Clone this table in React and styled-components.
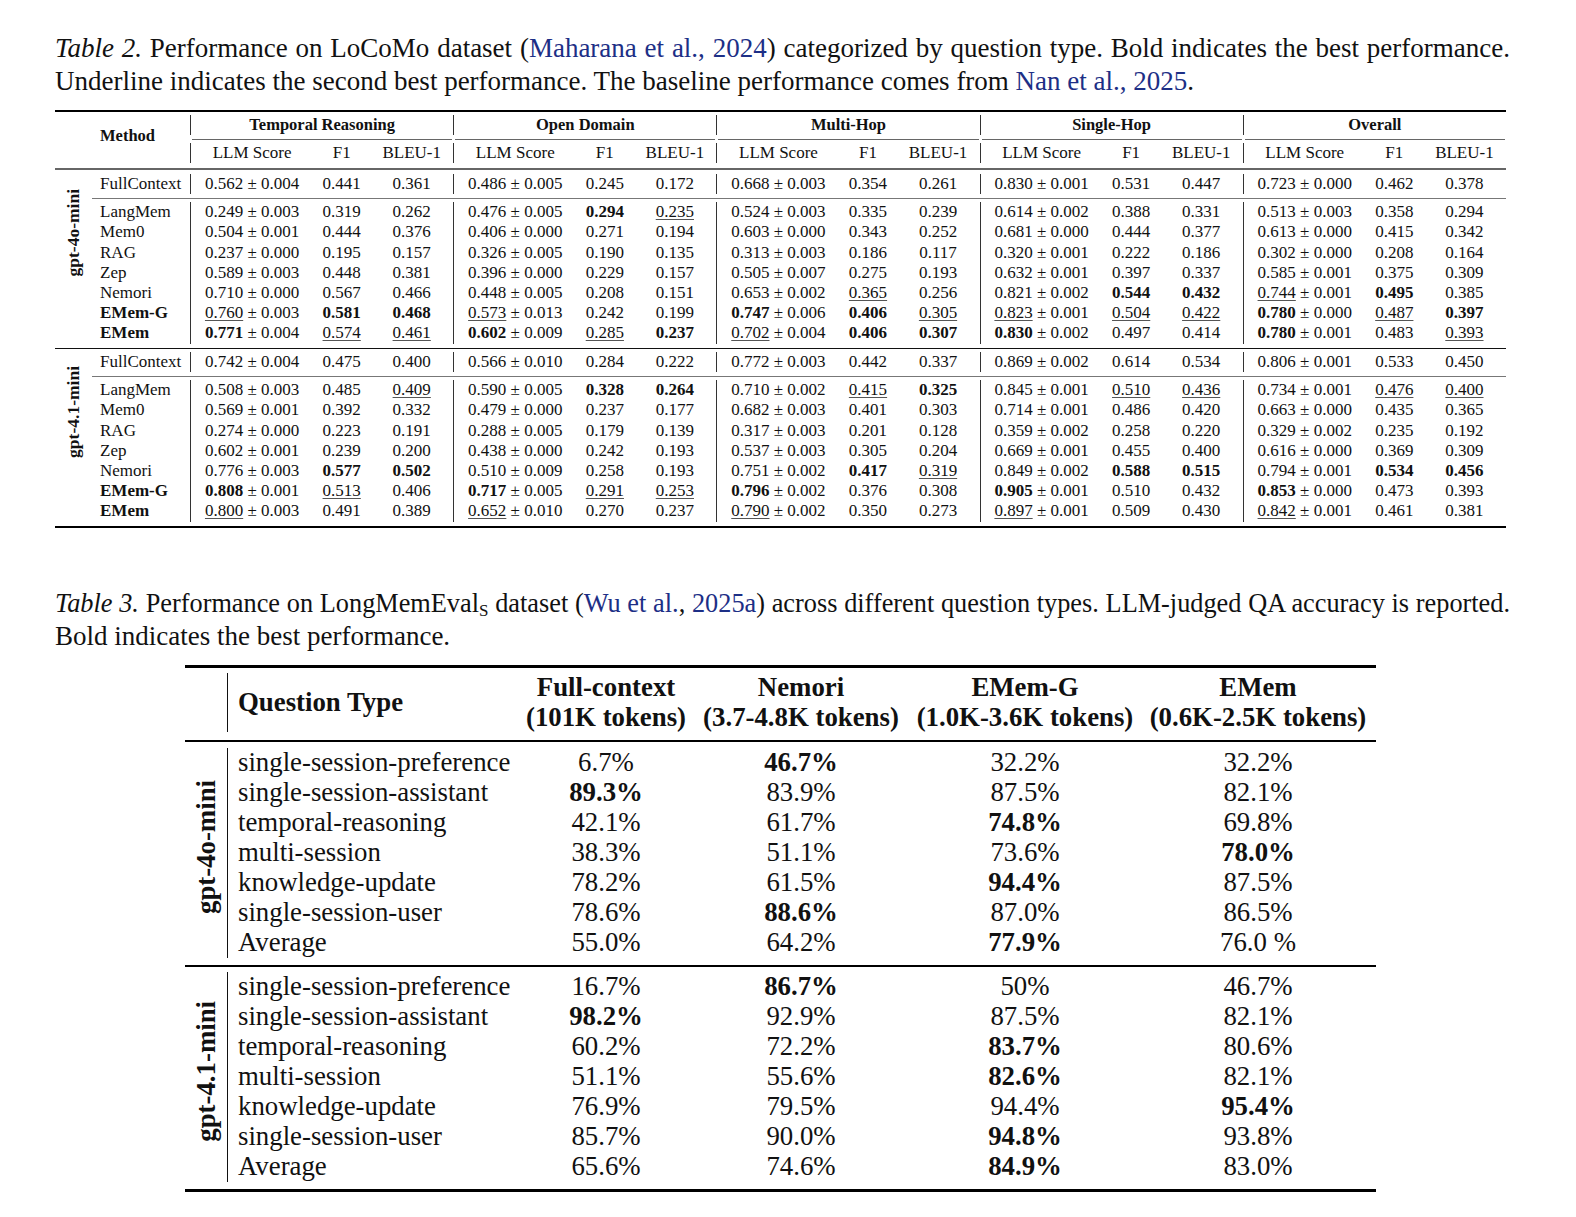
import React from 'react';
import styled, { createGlobalStyle } from 'styled-components';

const GlobalStyle = createGlobalStyle`
  html, body { margin: 0; padding: 0; background: #fff; }
  body { font-family: "Liberation Serif", "Times New Roman", serif; color: #111; }
`;

const Page = styled.div`
  width: 1576px;
  padding: 32px 0 0 55px;
  box-sizing: border-box;
`;

const Caption = styled.div`
  width: 1455px;
  font-size: 27px;
  line-height: 33px;
  margin-top: ${p => p.$top || 0}px;
`;

const CapLine = styled.div`
  white-space: nowrap;
  font-size: ${p => p.$size || 27}px;
  text-align: ${p => (p.$full ? 'justify' : 'left')};
  text-align-last: ${p => (p.$full ? 'justify' : 'auto')};
`;

const Lead = styled.i``;
const Cite = styled.span`
  color: #1d2f86;
`;

const Sub = styled.sub`
  font-size: 17px;
  vertical-align: -4px;
  line-height: 0;
`;

/* ---------- table 2 ---------- */

const T2 = styled.table`
  border-collapse: separate;
  border-spacing: 0;
  table-layout: fixed;
  width: 1451px;
  margin-top: 12px;
  font-size: 17px;
  line-height: 20.2px;
`;

const RuleCell = styled.td`
  padding: ${p => p.$pad};
`;

const Line = styled.div`
  height: ${p => p.$h}px;
  background: ${p => p.$c || '#000'};
`;

const Head = styled.th`
  padding: 0 0 ${p => p.$pb || 0}px;
  font-weight: 700;
  font-size: 16.5px;
  text-align: ${p => (p.$left ? 'left' : 'center')};
  padding-left: ${p => (p.$left ? '8px' : '0')};
  border-left: ${p => (p.$bar ? '1px solid #333' : 'none')};
  white-space: nowrap;
`;

const SubHead = styled.td`
  padding: 0;
  text-align: center;
  border-left: ${p => (p.$bar ? '1px solid #333' : 'none')};
  white-space: nowrap;
`;

const Model = styled.td`
  padding: ${p => p.$pt}px 0 ${p => p.$pb || 0}px;
  vertical-align: ${p => p.$va || 'top'};
  text-align: center;
`;

const ModelText = styled.div`
  writing-mode: vertical-rl;
  transform: rotate(180deg);
  font-weight: 700;
  font-size: ${p => p.$size}px;
  line-height: 1;
  margin: 0 auto;
  white-space: nowrap;
`;

const Method = styled.td`
  padding: 0 0 0 8px;
  text-align: left;
  font-weight: ${p => (p.$b ? 700 : 400)};
  white-space: nowrap;
`;

const Cell = styled.td`
  padding: 0;
  text-align: center;
  white-space: nowrap;
  border-left: ${p => (p.$bar ? '1px solid #333' : 'none')};
`;

const B = styled.b`
  font-weight: 700;
`;

const U = styled.span`
  text-decoration: underline;
  text-decoration-thickness: 1px;
  text-underline-offset: 2px;
  text-decoration-color: #555;
`;

const groups = ['Temporal Reasoning', 'Open Domain', 'Multi-Hop', 'Single-Hop', 'Overall'];

const t2 = [
  {
    model: 'gpt-4o-mini',
    full: '0.562±0.004 0.441 0.361 0.486±0.005 0.245 0.172 0.668±0.003 0.354 0.261 0.830±0.001 0.531 0.447 0.723±0.000 0.462 0.378',
    rows: [
      ['LangMem', false, '0.249±0.003 0.319 0.262 0.476±0.005 *0.294 _0.235 0.524±0.003 0.335 0.239 0.614±0.002 0.388 0.331 0.513±0.003 0.358 0.294'],
      ['Mem0', false, '0.504±0.001 0.444 0.376 0.406±0.000 0.271 0.194 0.603±0.000 0.343 0.252 0.681±0.000 0.444 0.377 0.613±0.000 0.415 0.342'],
      ['RAG', false, '0.237±0.000 0.195 0.157 0.326±0.005 0.190 0.135 0.313±0.003 0.186 0.117 0.320±0.001 0.222 0.186 0.302±0.000 0.208 0.164'],
      ['Zep', false, '0.589±0.003 0.448 0.381 0.396±0.000 0.229 0.157 0.505±0.007 0.275 0.193 0.632±0.001 0.397 0.337 0.585±0.001 0.375 0.309'],
      ['Nemori', false, '0.710±0.000 0.567 0.466 0.448±0.005 0.208 0.151 0.653±0.002 _0.365 0.256 0.821±0.002 *0.544 *0.432 _0.744±0.001 *0.495 0.385'],
      ['EMem-G', true, '_0.760±0.003 *0.581 *0.468 _0.573±0.013 0.242 0.199 *0.747±0.006 *0.406 _0.305 _0.823±0.001 _0.504 _0.422 *0.780±0.000 _0.487 *0.397'],
      ['EMem', true, '*0.771±0.004 _0.574 _0.461 *0.602±0.009 _0.285 *0.237 _0.702±0.004 *0.406 *0.307 *0.830±0.002 0.497 0.414 *0.780±0.001 0.483 _0.393'],
    ],
  },
  {
    model: 'gpt-4.1-mini',
    full: '0.742±0.004 0.475 0.400 0.566±0.010 0.284 0.222 0.772±0.003 0.442 0.337 0.869±0.002 0.614 0.534 0.806±0.001 0.533 0.450',
    rows: [
      ['LangMem', false, '0.508±0.003 0.485 _0.409 0.590±0.005 *0.328 *0.264 0.710±0.002 _0.415 *0.325 0.845±0.001 _0.510 _0.436 0.734±0.001 _0.476 _0.400'],
      ['Mem0', false, '0.569±0.001 0.392 0.332 0.479±0.000 0.237 0.177 0.682±0.003 0.401 0.303 0.714±0.001 0.486 0.420 0.663±0.000 0.435 0.365'],
      ['RAG', false, '0.274±0.000 0.223 0.191 0.288±0.005 0.179 0.139 0.317±0.003 0.201 0.128 0.359±0.002 0.258 0.220 0.329±0.002 0.235 0.192'],
      ['Zep', false, '0.602±0.001 0.239 0.200 0.438±0.000 0.242 0.193 0.537±0.003 0.305 0.204 0.669±0.001 0.455 0.400 0.616±0.000 0.369 0.309'],
      ['Nemori', false, '0.776±0.003 *0.577 *0.502 0.510±0.009 0.258 0.193 0.751±0.002 *0.417 _0.319 0.849±0.002 *0.588 *0.515 0.794±0.001 *0.534 *0.456'],
      ['EMem-G', true, '*0.808±0.001 _0.513 0.406 *0.717±0.005 _0.291 _0.253 *0.796±0.002 0.376 0.308 *0.905±0.001 0.510 0.432 *0.853±0.000 0.473 0.393'],
      ['EMem', true, '_0.800±0.003 0.491 0.389 _0.652±0.010 0.270 0.237 _0.790±0.002 0.350 0.273 _0.897±0.001 0.509 0.430 _0.842±0.001 0.461 0.381'],
    ],
  },
];

const Val = ({ t }) => {
  const [main, err] = t.split('±');
  const mark = main[0];
  const v = mark === '*' || mark === '_' ? main.slice(1) : main;
  const inner = mark === '*' ? <B>{v}</B> : mark === '_' ? <U>{v}</U> : v;
  return (
    <>
      {inner}
      {err && <> ± {err}</>}
    </>
  );
};

const Cells = ({ line }) =>
  line.split(' ').map((t, i) => (
    <Cell key={i} $bar={i % 3 === 0}>
      <Val t={t} />
    </Cell>
  ));

const Rule = ({ span, pad, h, c }) => (
  <tr>
    <RuleCell colSpan={span} $pad={pad}>
      <Line $h={h} $c={c} />
    </RuleCell>
  </tr>
);

const Table2 = () => (
  <T2>
    <colgroup>
      <col style={{ width: 37 }} />
      <col style={{ width: 98 }} />
      {groups.map(g => (
        <React.Fragment key={g}>
          <col style={{ width: 123 }} />
          <col style={{ width: 57 }} />
          <col style={{ width: 83 }} />
        </React.Fragment>
      ))}
    </colgroup>
    <tbody>
      <Rule span={17} pad="0 0 3px" h={2} />
      <tr>
        <Head rowSpan={3} />
        <Head rowSpan={3} $left $pb={7}>
          Method
        </Head>
        {groups.map(g => (
          <Head key={g} colSpan={3} $bar>
            {g}
          </Head>
        ))}
      </tr>
      <tr>
        {groups.map(g => (
          <RuleCell key={g} colSpan={3} $pad="4px 1px 3px 2px">
            <Line $h={1} $c="#666" />
          </RuleCell>
        ))}
      </tr>
      <tr>
        {groups.map(g => (
          <React.Fragment key={g}>
            <SubHead $bar>LLM Score</SubHead>
            <SubHead>F1</SubHead>
            <SubHead>BLEU-1</SubHead>
          </React.Fragment>
        ))}
      </tr>
      {t2.map((grp, gi) => (
        <React.Fragment key={grp.model}>
          <Rule span={17} pad={gi === 0 ? '5px 0 4px' : '4px 0 3px'} h={1.5} c={gi === 0 ? '#666' : '#111'} />
          <tr>
            <Model rowSpan={9} $pt={gi === 0 ? 15 : 14}>
              <ModelText $size={17.5}>{grp.model}</ModelText>
            </Model>
            <Method>FullContext</Method>
            <Cells line={grp.full} />
          </tr>
          <Rule span={16} pad="4px 0 3px" h={1} c="#777" />
          {grp.rows.map(([name, bold, line]) => (
            <tr key={name}>
              <Method $b={bold}>{name}</Method>
              <Cells line={line} />
            </tr>
          ))}
        </React.Fragment>
      ))}
      <Rule span={17} pad="4px 0 0" h={2} />
    </tbody>
  </T2>
);

/* ---------- table 3 ---------- */

const T3 = styled.table`
  border-collapse: separate;
  border-spacing: 0;
  table-layout: fixed;
  width: 1191px;
  margin: 12px 0 0 130px;
  font-size: 26.8px;
  line-height: 29.9px;
`;

const H3 = styled.th`
  padding: 0;
  font-weight: 700;
  text-align: ${p => (p.$left ? 'left' : 'center')};
  padding-left: ${p => (p.$left ? '10px' : '0')};
  border-left: ${p => (p.$bar ? '1.5px solid #111' : 'none')};
  white-space: nowrap;
  vertical-align: middle;
`;

const QType = styled.td`
  padding: 0 0 0 10px;
  border-left: 1.5px solid #111;
  white-space: nowrap;
`;

const Pct = styled.td`
  padding: 0;
  text-align: center;
  white-space: nowrap;
  font-weight: ${p => (p.$b ? 700 : 400)};
`;

const t3 = [
  {
    model: 'gpt-4o-mini',
    rows: [
      ['single-session-preference', '6.7%', '*46.7%', '32.2%', '32.2%'],
      ['single-session-assistant', '*89.3%', '83.9%', '87.5%', '82.1%'],
      ['temporal-reasoning', '42.1%', '61.7%', '*74.8%', '69.8%'],
      ['multi-session', '38.3%', '51.1%', '73.6%', '*78.0%'],
      ['knowledge-update', '78.2%', '61.5%', '*94.4%', '87.5%'],
      ['single-session-user', '78.6%', '*88.6%', '87.0%', '86.5%'],
      ['Average', '55.0%', '64.2%', '*77.9%', '76.0 %'],
    ],
  },
  {
    model: 'gpt-4.1-mini',
    rows: [
      ['single-session-preference', '16.7%', '*86.7%', '50%', '46.7%'],
      ['single-session-assistant', '*98.2%', '92.9%', '87.5%', '82.1%'],
      ['temporal-reasoning', '60.2%', '72.2%', '*83.7%', '80.6%'],
      ['multi-session', '51.1%', '55.6%', '*82.6%', '82.1%'],
      ['knowledge-update', '76.9%', '79.5%', '94.4%', '*95.4%'],
      ['single-session-user', '85.7%', '90.0%', '*94.8%', '93.8%'],
      ['Average', '65.6%', '74.6%', '*84.9%', '83.0%'],
    ],
  },
];

const cols3 = [
  ['Full-context', '(101K tokens)'],
  ['Nemori', '(3.7-4.8K tokens)'],
  ['EMem-G', '(1.0K-3.6K tokens)'],
  ['EMem', '(0.6K-2.5K tokens)'],
];

const Table3 = () => (
  <T3>
    <colgroup>
      <col style={{ width: 42 }} />
      <col style={{ width: 293 }} />
      <col style={{ width: 172 }} />
      <col style={{ width: 218 }} />
      <col style={{ width: 230 }} />
      <col style={{ width: 236 }} />
    </colgroup>
    <tbody>
      <Rule span={6} pad="0 0 5px" h={3} />
      <tr>
        <H3 />
        <H3 $left $bar>
          Question Type
        </H3>
        {cols3.map(([a, b]) => (
          <H3 key={a}>
            {a}
            <br />
            {b}
          </H3>
        ))}
      </tr>
      {t3.map((grp, gi) => (
        <React.Fragment key={grp.model}>
          <Rule span={6} pad={gi === 0 ? '8px 0 6px' : '7.5px 0 5px'} h={2} />
          {grp.rows.map(([q, ...vals], ri) => (
            <tr key={q}>
              {ri === 0 && (
                <Model rowSpan={7} $pt={0} $pb={12} $va="middle">
                  <ModelText $size={26.8}>{grp.model}</ModelText>
                </Model>
              )}
              <QType>{q}</QType>
              {vals.map((v, i) => (
                <Pct key={i} $b={v[0] === '*'}>
                  {v[0] === '*' ? v.slice(1) : v}
                </Pct>
              ))}
            </tr>
          ))}
        </React.Fragment>
      ))}
      <Rule span={6} pad="7px 0 0" h={3} />
    </tbody>
  </T3>
);

export default function App() {
  return (
    <Page>
      <GlobalStyle />
      <Caption>
        <CapLine $full>
          <Lead>Table 2.</Lead> Performance on LoCoMo dataset (<Cite>Maharana et al., 2024</Cite>) categorized by
          question type. Bold indicates the best performance.
        </CapLine>
        <CapLine>
          Underline indicates the second best performance. The baseline performance comes from{' '}
          <Cite>Nan et al., 2025</Cite>.
        </CapLine>
      </Caption>
      <Table2 />
      <Caption $top={59}>
        <CapLine $full $size={26.3}>
          <Lead>Table 3.</Lead> Performance on LongMemEval<Sub>S</Sub> dataset (<Cite>Wu et al.</Cite>,{' '}
          <Cite>2025a</Cite>) across different question types. LLM-judged QA accuracy is reported.
        </CapLine>
        <CapLine>Bold indicates the best performance.</CapLine>
      </Caption>
      <Table3 />
    </Page>
  );
}
